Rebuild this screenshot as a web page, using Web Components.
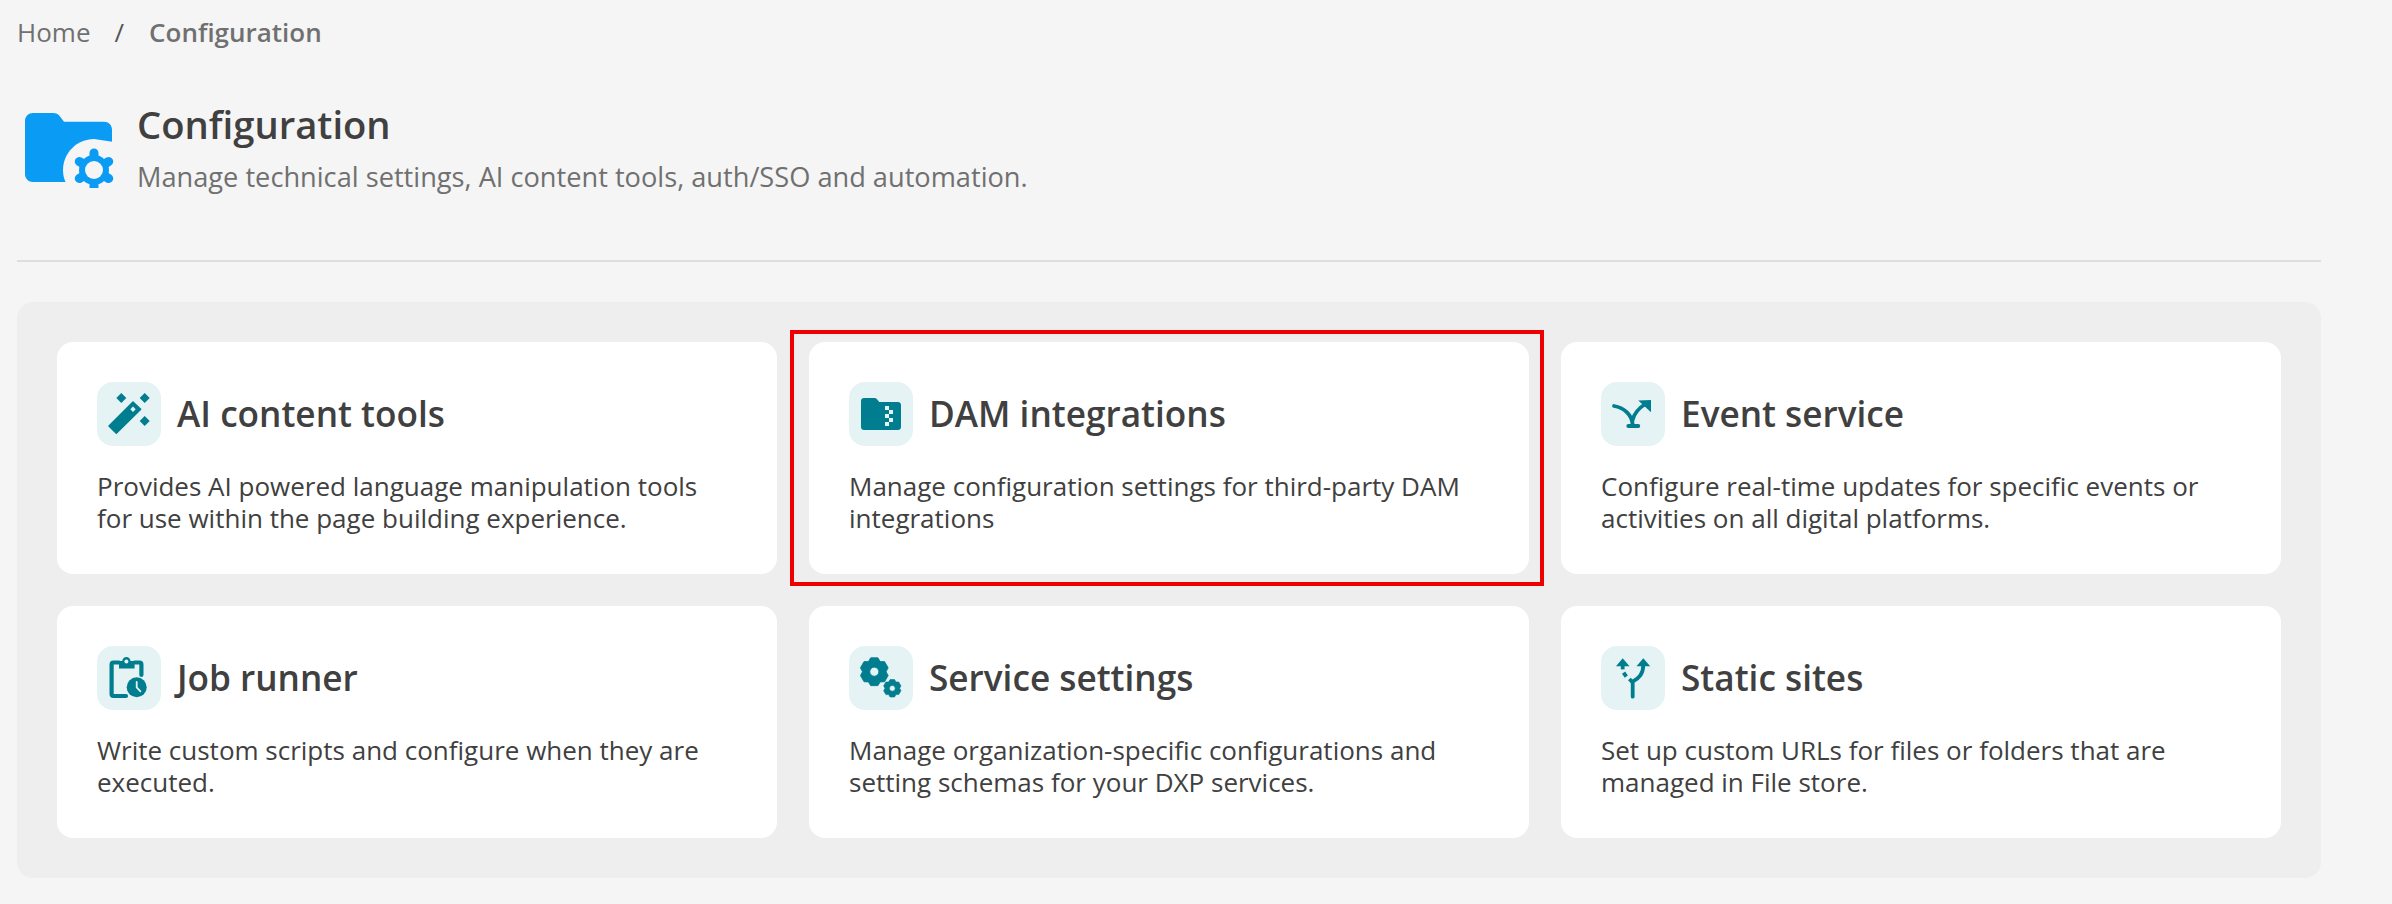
<!DOCTYPE html>
<html lang="en">
<head>
<meta charset="utf-8">
<title>Configuration</title>
<style>
    html, body { margin: 0; background: #f5f5f5; }
    body { font-family: "Open Sans", "Liberation Sans", sans-serif; }
</style>
</head>
<body>
<config-page>
    <bread-crumbs slot="crumbs" current="Configuration"></bread-crumbs>
    <page-header slot="header" title="Configuration" subtitle="Manage technical settings, AI content tools, auth/SSO and automation."></page-header>
    <card-panel slot="panel">
        <config-card icon="wand" title="AI content tools">Provides AI powered language manipulation tools for use within the page building experience.</config-card>
        <config-card icon="dam" title="DAM integrations" highlighted>Manage configuration settings for third-party DAM integrations</config-card>
        <config-card icon="event" title="Event service">Configure real-time updates for specific events or activities on all digital platforms.</config-card>
        <config-card icon="job" title="Job runner">Write custom scripts and configure when they are executed.</config-card>
        <config-card icon="gears" title="Service settings">Manage organization-specific configurations and setting schemas for your DXP services.</config-card>
        <config-card icon="fork" title="Static sites">Set up custom URLs for files or folders that are managed in File store.</config-card>
    </card-panel>
</config-page>

<script>
// builds a gear outline, teeth are trapezoids around the centre
function gearPath(cx, cy, outer, inner, teeth) {
    const step = Math.PI * 2 / teeth;
    const pts = [];
    for (let i = 0; i < teeth; i++) {
        const a = i * step - Math.PI / 2;
        const spots = [[-0.5, inner], [-0.24, outer], [0.24, outer], [0.5, inner]];
        for (const [t, r] of spots) {
            pts.push((cx + r * Math.cos(a + t * step)).toFixed(2) + ' ' + (cy + r * Math.sin(a + t * step)).toFixed(2));
        }
    }
    return 'M' + pts.join('L') + 'Z';
}

const ICONS = {
    wand: `
        <path d="M36 20L43.7 27.3L19.3 51.3L12 44Z" fill="#007d8f" stroke="#007d8f" stroke-width="1.5" stroke-linejoin="round"/>
        <path d="M36 24.6L38.7 27.3L36 30L33.3 27.3Z" fill="#e5f3f5"/>
        <path d="M24.3 11L29.3 16L24.3 21L19.3 16Z" fill="#007d8f"/>
        <path d="M47.7 11L52.7 16L47.7 21L42.7 16Z" fill="#007d8f"/>
        <path d="M47.7 34L52.7 39L47.7 44L42.7 39Z" fill="#007d8f"/>`,
    dam: `
        <path d="M15 16H25.5C26.6 16 27.4 16.4 28 17.2L30.2 20H49C50.7 20 52 21.3 52 23V45C52 46.7 50.7 48 49 48H15C13.3 48 12 46.7 12 45V19C12 17.3 13.3 16 15 16Z" fill="#007d8f"/>
        <path d="M36 24H40V28H36ZM40 28H44V32H40ZM36 32H40V36H36ZM40 36H44V40H40ZM36 40H40V44H36Z" fill="#e5f3f5"/>`,
    event: `
        <path d="M13 24C22 25.5 31.7 32 31.7 44M31.7 38C33 31 38 26 45 21.5" fill="none" stroke="#007d8f" stroke-width="3.8" stroke-linecap="round"/>
        <path d="M27.3 44H37.3" fill="none" stroke="#007d8f" stroke-width="3.8" stroke-linecap="round"/>
        <path d="M37.3 18.4L50 18V30.3Z" fill="#007d8f"/>`,
    job: `
        <path d="M22 16.5H16.5C15.4 16.5 14.6 17.3 14.6 18.5V48C14.6 49.2 15.4 50 16.5 50H29M37.6 16.5H42.5C43.6 16.5 44.4 17.3 44.4 18.5V29" fill="none" stroke="#007d8f" stroke-width="4.2" stroke-linecap="round"/>
        <path d="M22 15H25.2C25.8 12.4 27.3 11 29.4 11C31.5 11 33 12.4 33.6 15H37.6V22.5H22Z" fill="#007d8f"/>
        <circle cx="29.4" cy="15.6" r="2" fill="#e5f3f5"/>
        <circle cx="39.7" cy="41.3" r="10" fill="#007d8f"/>
        <path d="M39.7 36V41.3L43.4 45.3" fill="none" stroke="#e5f3f5" stroke-width="1.8" stroke-linecap="round"/>`,
    gears: `
        <path fill-rule="evenodd" d="${gearPath(25.3, 25.7, 14.4, 11.8, 6)}M25.3 21.2A4.5 4.5 0 1 0 25.3 30.2A4.5 4.5 0 1 0 25.3 21.2Z" fill="#007d8f" stroke="#007d8f" stroke-width="0.8" stroke-linejoin="round"/>
        <path fill-rule="evenodd" d="${gearPath(43.3, 42.3, 9, 7.3, 6)}M43.3 39.4A2.9 2.9 0 1 0 43.3 45.2A2.9 2.9 0 1 0 43.3 39.4Z" fill="#007d8f" stroke="#007d8f" stroke-width="0.6" stroke-linejoin="round"/>`,
    fork: `
        <path d="M31.7 50.7V35.7C38 32 42.3 28 42.3 19" fill="none" stroke="#007d8f" stroke-width="3.8" stroke-linecap="round"/>
        <path d="M31.7 36.5L28.4 33" fill="none" stroke="#007d8f" stroke-width="3.8"/>
        <path d="M35.5 20.3L42.3 12.3L49.2 20.3Z" fill="#007d8f"/>
        <path d="M15 20.3L21.7 12.3L28.5 20.3Z" fill="#007d8f"/>
        <path d="M21.7 20V23.4" fill="none" stroke="#007d8f" stroke-width="3.8"/>
        <path d="M22.6 26.6L25.3 30.6" fill="none" stroke="#007d8f" stroke-width="3.8"/>`
};

class ConfigPage extends HTMLElement {
    constructor() {
        super();
        this.attachShadow({ mode: 'open' });
    }

    connectedCallback() {
        this.shadowRoot.innerHTML = `
            <style>
                :host {
                    display: block;
                    width: 2304px;
                    margin-left: 17px;
                    font-family: "Open Sans", "Liberation Sans", sans-serif;
                }
            </style>
            <slot name="crumbs"></slot>
            <slot name="header"></slot>
            <slot name="panel"></slot>
        `;
    }
}

class BreadCrumbs extends HTMLElement {
    constructor() {
        super();
        this.attachShadow({ mode: 'open' });
    }

    connectedCallback() {
        this.shadowRoot.innerHTML = `
            <style>
                :host {
                    display: flex;
                    align-items: center;
                    height: 64px;
                    font-size: 26px;
                    color: #707070;
                }
                .sep { margin: 0 25px 0 24px; color: #555; }
                .current { font-weight: 600; }
            </style>
            <span>Home</span>
            <span class="sep">/</span>
            <span class="current">${this.getAttribute('current')}</span>
        `;
    }
}

class PageHeader extends HTMLElement {
    constructor() {
        super();
        this.attachShadow({ mode: 'open' });
    }

    connectedCallback() {
        this.shadowRoot.innerHTML = `
            <style>
                :host {
                    display: flex;
                    box-sizing: border-box;
                    height: 198px;
                    padding-top: 35px;
                    margin-bottom: 40px;
                    border-bottom: 2px solid #dedede;
                }
                svg { width: 90px; height: 76px; margin: 13px 0 0 7px; flex: none; }
                .text { margin-left: 23px; }
                h1 { margin: 0; font-size: 38.2px; line-height: 50px; font-weight: 600; color: #404040; }
                p { margin: 3px 0 0; font-size: 27.2px; line-height: 50px; color: #707070; }
            </style>
            <svg viewBox="0 0 90 76">
                <path d="M9 1H29C32 1 34.5 2 36 4.5L40 9.7H80C84.5 9.7 88 13 88 17.5V70H9C4.5 70 1 66.5 1 62V9C1 4.5 4.5 1 9 1Z" fill="#0a9cf5"/>
                <path d="M70 27C53 27 39 41 39 58C39 63 40 67 42 71H90V30Z" fill="#f5f5f5"/>
                <g stroke="#0a9cf5" stroke-width="9" stroke-linecap="round">
                    <path d="M70 41V75M55.3 49.5L84.7 66.5M84.7 49.5L55.3 66.5"/>
                </g>
                <circle cx="70" cy="58" r="15" fill="#0a9cf5"/>
                <circle cx="70" cy="58" r="9" fill="#f5f5f5"/>
            </svg>
            <div class="text">
                <h1>${this.getAttribute('title')}</h1>
                <p>${this.getAttribute('subtitle')}</p>
            </div>
        `;
    }
}

class CardPanel extends HTMLElement {
    constructor() {
        super();
        this.attachShadow({ mode: 'open' });
    }

    connectedCallback() {
        this.shadowRoot.innerHTML = `
            <style>
                :host {
                    display: grid;
                    grid-template-columns: repeat(3, 1fr);
                    gap: 32px;
                    padding: 40px;
                    background: #eeeeee;
                    border-radius: 16px;
                }
            </style>
            <slot></slot>
        `;
    }
}

class ConfigCard extends HTMLElement {
    constructor() {
        super();
        this.attachShadow({ mode: 'open' });
    }

    connectedCallback() {
        const mark = this.hasAttribute('highlighted') ? '<span class="mark"></span>' : '';
        this.shadowRoot.innerHTML = `
            <style>
                :host {
                    display: block;
                    position: relative;
                    box-sizing: border-box;
                    height: 232px;
                    padding: 40px;
                    background: #fff;
                    border-radius: 16px;
                }
                .head { display: flex; align-items: center; gap: 16px; }
                .icon { flex: none; width: 64px; height: 64px; background: #e5f3f5; border-radius: 16px; }
                svg { display: block; width: 64px; height: 64px; }
                h2 { margin: -2px 0 0; font-size: 35.2px; font-weight: 600; color: #404040; }
                p { margin: 24px 0 0; font-size: 26px; line-height: 32px; color: #404040; }
                .mark {
                    position: absolute;
                    top: -12px;
                    bottom: -12px;
                    left: -19px;
                    right: -15px;
                    border: 4px solid #ee0000;
                }
            </style>
            <div class="head">
                <div class="icon"><svg viewBox="0 0 64 64">${ICONS[this.getAttribute('icon')]}</svg></div>
                <h2>${this.getAttribute('title')}</h2>
            </div>
            <p><slot></slot></p>
            ${mark}
        `;
    }
}

customElements.define('config-page', ConfigPage);
customElements.define('bread-crumbs', BreadCrumbs);
customElements.define('page-header', PageHeader);
customElements.define('card-panel', CardPanel);
customElements.define('config-card', ConfigCard);
</script>
</body>
</html>
